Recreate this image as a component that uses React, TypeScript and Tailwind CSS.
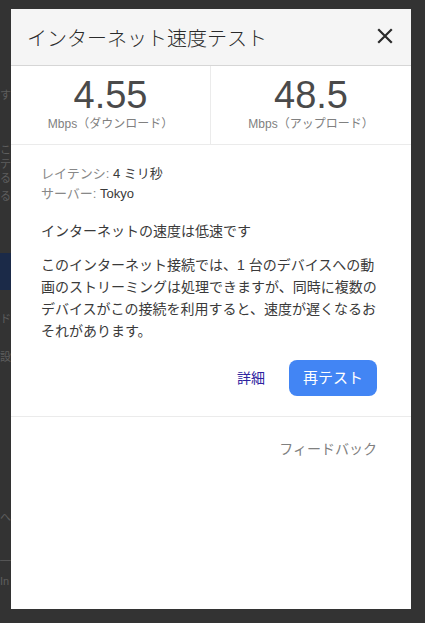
import React from "react";

const font = { fontFamily: '"Liberation Sans", Arial, "Noto Sans CJK JP", sans-serif' };

export default function App() {
  return (
    <div className="relative w-[425px] h-[623px] overflow-hidden bg-[#333333]" style={font}>
      {/* dimmed page behind the overlay */}
      <div className="flex flex-col w-[11px] text-[11px] leading-[14px] text-[#5e5e5e]">
        <div className="h-[88px]" />
        <div>す</div>
        <div className="h-[41px]" />
        <div>こ</div>
        <div>テ</div>
        <div>る</div>
        <div className="h-[4px]" />
        <div>る</div>
        <div className="h-[50px]" />
        <div className="h-[37px] bg-[#1b2a48]" />
        <div className="h-[22px]" />
        <div>ド</div>
        <div className="h-[24px]" />
        <div>設</div>
        <div className="h-[146px]" />
        <div>へ</div>
        <div className="h-[28px]" />
        <div>—</div>
        <div className="h-[8px]" />
        <div>In</div>
      </div>

      {/* modal */}
      <div className="absolute left-[11px] top-[9px] w-[400px] h-[600px] bg-white flex flex-col">
        <div className="h-[57px] bg-[#f5f5f5] border-b border-[#d6d6d6] flex items-center justify-between pl-[16px] pr-[18px]">
          <span className="text-[20px] text-[#2a2a2a] mt-[1px]" style={{ fontFamily: '"Noto Sans CJK JP", sans-serif', fontWeight: 300 }}>
            インターネット速度テスト
          </span>
          <svg width="16" height="16" viewBox="0 0 16 16" className="mt-[-2px]">
            <path d="M2 2 L14 14 M14 2 L2 14" stroke="#2a2a2a" strokeWidth="2.2" strokeLinecap="square" />
          </svg>
        </div>

        <div className="h-[79px] border-b border-[#ebebeb] grid grid-cols-2">
          <div className="flex flex-col items-center pt-[9px] border-r border-[#ebebeb]">
            <span className="text-[38px] leading-[40px] text-[#4a4a4a]">4.55</span>
            <span className="text-[12px] leading-[16px] text-[#808080] mt-[1px]">Mbps（ダウンロード）</span>
          </div>
          <div className="flex flex-col items-center pt-[9px]">
            <span className="text-[38px] leading-[40px] text-[#4a4a4a]">48.5</span>
            <span className="text-[12px] leading-[16px] text-[#808080] mt-[1px]">Mbps（アップロード）</span>
          </div>
        </div>

        <div className="pl-[30px] pr-[32px] pt-[19px] flex flex-col">
          <div className="text-[13px] leading-[20px]">
            <div><span className="text-[#888]">レイテンシ: </span><span className="text-[#3a3a3a]">4 ミリ秒</span></div>
            <div><span className="text-[#888]">サーバー: </span><span className="text-[#3a3a3a]">Tokyo</span></div>
          </div>
          <div className="text-[14px] leading-[22px] text-[#3a3a3a] mt-[16px]">インターネットの速度は低速です</div>
          <div className="text-[14px] leading-[22px] text-[#3a3a3a] mt-[12px]">
            このインターネット接続では、1 台のデバイスへの動画のストリーミングは処理できますが、同時に複数のデバイスがこの接続を利用すると、速度が遅くなるおそれがあります。
          </div>
          <div className="flex justify-end items-center mt-[18px] pr-[2px]">
            <span className="text-[14px] text-[#2e23a0] mr-[24px]">詳細</span>
            <div className="w-[88px] h-[36px] rounded-[8px] bg-[#4285f4] flex items-center justify-center text-white text-[15px]">
              再テスト
            </div>
          </div>
        </div>

        <div className="mt-[20px] border-t border-[#ebebeb] flex justify-end pr-[34px] pt-[22px]">
          <span className="text-[14px] text-[#808080]">フィードバック</span>
        </div>
      </div>
    </div>
  );
}
